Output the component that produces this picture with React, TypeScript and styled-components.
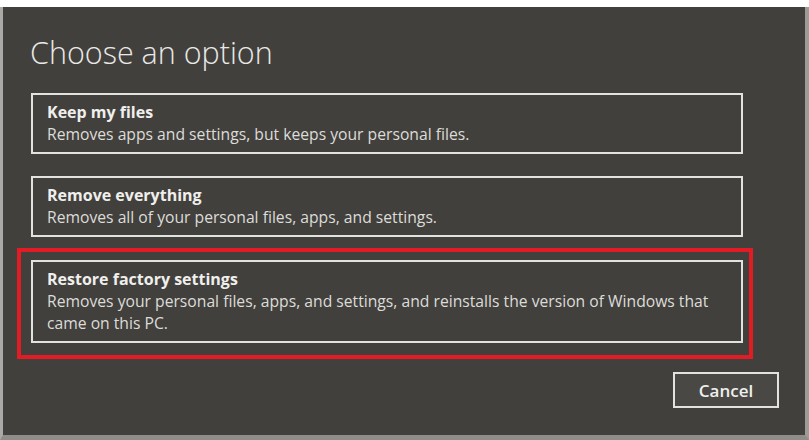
import styled, { createGlobalStyle } from "styled-components";

const GlobalStyle = createGlobalStyle`
  html, body {
    margin: 0;
    padding: 0;
    background: #ffffff;
  }
  body {
    font-family: "Open Sans", "Noto Sans", sans-serif;
  }
`;

interface OptionData {
  title: string;
  text: string;
  highlighted?: boolean;
}

const options: OptionData[] = [
  {
    title: "Keep my files",
    text: "Removes apps and settings, but keeps your personal files.",
  },
  {
    title: "Remove everything",
    text: "Removes all of your personal files, apps, and settings.",
  },
  {
    title: "Restore factory settings",
    text: "Removes your personal files, apps, and settings, and reinstalls the version of Windows that came on this PC.",
    highlighted: true,
  },
];

const Frame = styled.div`
  margin-top: 7px;
  height: 428px;
  background: #42403c;
  border-left: 3px solid #a9a9a7;
  border-right: 4px solid #9c9b98;
  border-bottom: 5px solid #8e8d8a;
  display: flex;
  flex-direction: column;
  padding: 0 26px 0 28px;
  box-sizing: content-box;
  width: 748px;
`;

const Heading = styled.h1`
  margin: 26px 0 0 -1px;
  font-size: 30.5px;
  line-height: 38px;
  font-weight: 300;
  color: #e9e9e7;
`;

const OptionList = styled.div`
  display: flex;
  flex-direction: column;
  gap: 22px;
  margin-top: 22px;
  width: 712px;
`;

const Highlight = styled.div`
  border: 4px solid #e31b25;
  margin: -11px -10px 0 -14px;
  padding: 8px 6px 12px 10px;
`;

const Card = styled.button`
  display: flex;
  flex-direction: column;
  align-items: flex-start;
  width: 100%;
  box-sizing: border-box;
  border: 2px solid #e2e2df;
  background: transparent;
  padding: 7px 22px 7px 14px;
  text-align: left;
  font-family: inherit;
  cursor: pointer;
`;

const CardTitle = styled.span`
  font-size: 16px;
  line-height: 21px;
  font-weight: 700;
  color: #efefed;
`;

const CardText = styled.span`
  font-size: 15.7px;
  line-height: 22px;
  color: #dcdcd9;
`;

const Footer = styled.div`
  display: flex;
  justify-content: flex-end;
  margin-top: 13px;
`;

const CancelButton = styled.button`
  width: 106px;
  height: 36px;
  border: 2px solid #e2e2df;
  background: #4a4845;
  color: #efefed;
  font-family: inherit;
  font-size: 17px;
  font-weight: 600;
  cursor: pointer;
`;

const Option = ({ title, text }: OptionData) => (
  <Card>
    <CardTitle>{title}</CardTitle>
    <CardText>{text}</CardText>
  </Card>
);

export default function App() {
  return (
    <>
      <GlobalStyle />
      <Frame>
        <Heading>Choose an option</Heading>
        <OptionList>
          {options.map((o) =>
            o.highlighted ? (
              <Highlight key={o.title}>
                <Option {...o} />
              </Highlight>
            ) : (
              <Option key={o.title} {...o} />
            )
          )}
        </OptionList>
        <Footer>
          <CancelButton>Cancel</CancelButton>
        </Footer>
      </Frame>
    </>
  );
}
